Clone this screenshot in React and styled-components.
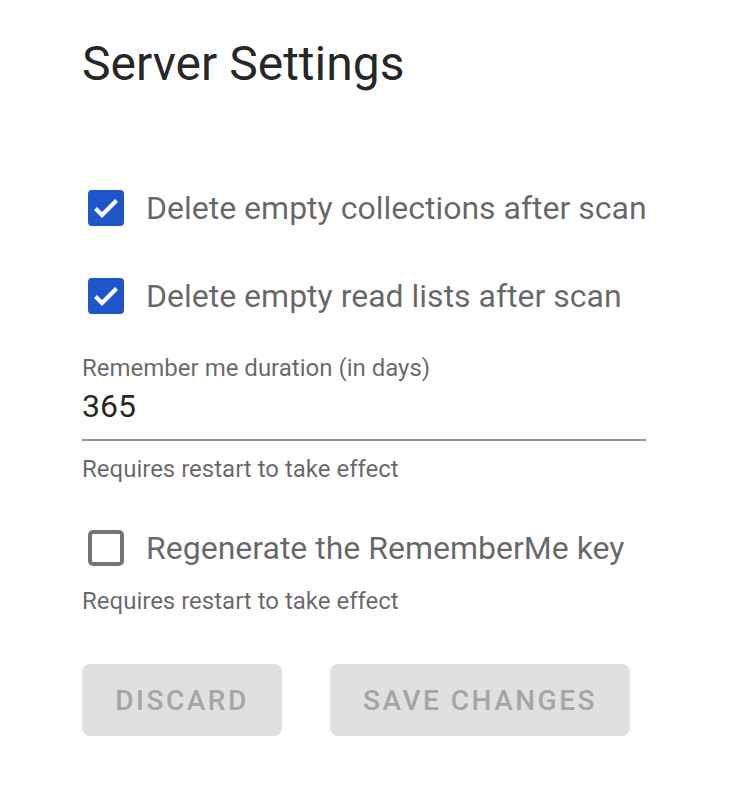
import React, { useState } from 'react'
import styled, { createGlobalStyle } from 'styled-components'

const Global = createGlobalStyle`
  body {
    margin : 0;
    background : #ffffff;
    font-family : Roboto, "Liberation Sans", sans-serif;
  }
`
const Page = styled.div`
  padding : 32px 0 40px 82px;
  width : 564px;
`
const Title = styled.div`
  font-size : 48px;
  line-height : 64px;
  color : rgba(0, 0, 0, 0.87);
  margin-bottom : 88px;
`
const CheckRow = styled.label`
  display : flex;
  align-items : center;
  height : 48px;
  margin-bottom : ${p => p.gap || 0}px;
  cursor : pointer;
`
const Box = styled.span`
  width : 48px;
  height : 48px;
  flex-shrink : 0;
  display : flex;
  align-items : center;
  justify-content : center;
  svg{
    display : block;
  }
`
const CheckLabel = styled.span`
  margin-left : 16px;
  font-size : 32px;
  white-space : nowrap;
  color : rgba(0, 0, 0, 0.6);
`
const Field = styled.div`
  display : flex;
  flex-direction : column;
  margin-bottom : 39px;
`
const FieldLabel = styled.div`
  font-size : 24px;
  line-height : 28px;
  color : rgba(0, 0, 0, 0.6);
`
const Input = styled.input`
  border : none;
  outline : none;
  padding : 4px 0 13px;
  font-family : inherit;
  font-size : 32px;
  line-height : 40px;
  color : rgba(0, 0, 0, 0.87);
  border-bottom : 2px solid rgba(0, 0, 0, 0.42);
  background : transparent;
`
const Hint = styled.div`
  font-size : 24px;
  line-height : 32px;
  color : rgba(0, 0, 0, 0.6);
  margin-top : ${p => p.top || 0}px;
`
const Actions = styled.div`
  display : flex;
  gap : 48px;
  margin-top : 47px;
`
const Button = styled.button`
  height : 72px;
  padding : 0 32px;
  min-width : ${p => p.wide ? 300 : 200}px;
  border : none;
  border-radius : 8px;
  background : #e0e0e0;
  color : #a6a6a6;
  font-family : inherit;
  font-size : 28px;
  font-weight : 500;
  letter-spacing : 0.089em;
  text-transform : uppercase;
`

function Checkbox({ checked, onChange, label, gap }) {
  return (
    <CheckRow gap={gap} onClick={onChange}>
      <Box>
        {checked ? (
          <svg width="36" height="36" viewBox="0 0 36 36">
            <rect width="36" height="36" rx="4" fill="#1e55c8" />
            <path d="M7.5 18.5 L14 25 L28.5 10.5" fill="none" stroke="#fff" strokeWidth="4.2" />
          </svg>
        ) : (
          <svg width="36" height="36" viewBox="0 0 36 36">
            <rect x="2" y="2" width="32" height="32" rx="3" fill="none" stroke="#757575" strokeWidth="4" />
          </svg>
        )}
      </Box>
      <CheckLabel>{label}</CheckLabel>
    </CheckRow>
  )
}

export default function App() {
  const [a, setA] = useState(true)
  const [b, setB] = useState(true)
  const [c, setC] = useState(false)
  return (
    <Page>
      <Global />
      <Title>Server Settings</Title>
      <Checkbox checked={a} onChange={() => setA(!a)} label="Delete empty collections after scan" gap={40} />
      <Checkbox checked={b} onChange={() => setB(!b)} label="Delete empty read lists after scan" gap={34} />
      <Field>
        <FieldLabel>Remember me duration (in days)</FieldLabel>
        <Input defaultValue="365" />
        <Hint top={12}>Requires restart to take effect</Hint>
      </Field>
      <Checkbox checked={c} onChange={() => setC(!c)} label="Regenerate the RememberMe key" gap={13} />
      <Hint>Requires restart to take effect</Hint>
      <Actions>
        <Button>Discard</Button>
        <Button wide>Save changes</Button>
      </Actions>
    </Page>
  )
}
